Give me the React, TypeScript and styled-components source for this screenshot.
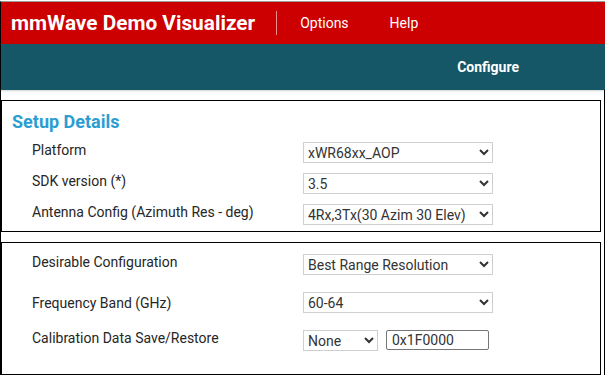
import React from "react";
import styled, { createGlobalStyle } from "styled-components";

const GlobalStyle = createGlobalStyle`
  html, body {
    margin: 0;
    padding: 0;
    background: #ffffff;
  }
  body {
    font-family: Roboto, "Liberation Sans", Arial, sans-serif;
    overflow: hidden;
  }
`;

const Frame = styled.div`
  width: 605px;
  height: 374px;
  box-sizing: border-box;
  margin-top: 1px;
  border-top: 1px solid #9a9a9a;
  border-left: 1px solid #000;
  display: flex;
  flex-direction: column;
`;

const TopBar = styled.header`
  height: 42px;
  background: #cc0000;
  display: flex;
  align-items: center;
  padding-left: 10px;
  color: #fff;
`;

const Brand = styled.div`
  font-size: 20.8px;
  font-weight: 700;
`;

const Divider = styled.span`
  width: 1px;
  height: 24px;
  margin: 0 23px 0 21px;
  background: rgba(255, 255, 255, 0.55);
`;

const MenuItem = styled.span`
  font-size: 14px;
  margin-right: 41px;
`;

const SubBar = styled.nav`
  height: 47px;
  background: #155767;
  box-shadow: 0 1px 2px rgba(0, 0, 0, 0.18);
  display: flex;
  align-items: center;
  justify-content: flex-end;
  padding-right: 86px;
  color: #fff;
  position: relative;
  z-index: 1;
`;

const Tab = styled.span`
  font-size: 14px;
  font-weight: 700;
`;

const Main = styled.main`
  flex: 1;
  border-right: 1px solid #000;
  padding-top: 10px;
  display: flex;
  flex-direction: column;
  gap: 10px;
`;

const Panel = styled.section<{ $top: number; $gap: number; $bottom: number }>`
  width: 600px;
  box-sizing: border-box;
  border: 1px solid #000;
  padding: ${(p) => p.$top}px 0 ${(p) => p.$bottom}px 10px;
  display: flex;
  flex-direction: column;
  gap: ${(p) => p.$gap}px;
`;

const Title = styled.h2`
  margin: 0 0 -1px;
  font-size: 18px;
  line-height: 22px;
  font-weight: 700;
  color: #2c9dd1;
`;

const Row = styled.div`
  display: grid;
  grid-template-columns: 271px auto;
  align-items: center;
  padding-left: 20px;
`;

const Label = styled.label<{ $shift?: number }>`
  font-size: 14px;
  color: #262626;
  margin-top: ${(p) => p.$shift ?? -5}px;
`;

const Controls = styled.div`
  display: flex;
  align-items: center;
  gap: 8px;
`;

const Select = styled.select<{ $w?: number }>`
  width: ${(p) => p.$w ?? 190}px;
  height: 21px;
  box-sizing: border-box;
  border: 1px solid #cfcfcf;
  border-radius: 0;
  background: #fff;
  color: #333;
  font-family: Roboto, "Liberation Sans", Arial, sans-serif;
  font-size: 14px;
  padding: 0;
  outline: none;
`;

const TextInput = styled.input`
  width: 103px;
  height: 20px;
  box-sizing: border-box;
  border: 1px solid #767676;
  border-radius: 2px;
  font-family: Roboto, "Liberation Sans", Arial, sans-serif;
  font-size: 14px;
  color: #333;
  padding: 0 5px;
  margin-top: -1px;
`;

const setupRows = [
  { label: "Platform", value: "xWR68xx_AOP" },
  { label: "SDK version (*)", value: "3.5" },
  { label: "Antenna Config (Azimuth Res - deg)", value: "4Rx,3Tx(30 Azim 30 Elev)" },
];

export default function App() {
  return (
    <>
      <GlobalStyle />
      <Frame>
        <TopBar>
          <Brand>mmWave Demo Visualizer</Brand>
          <Divider />
          <MenuItem>Options</MenuItem>
          <MenuItem>Help</MenuItem>
        </TopBar>
        <SubBar>
          <Tab>Configure</Tab>
        </SubBar>
        <Main>
          <Panel $top={10} $gap={10} $bottom={6}>
            <Title>Setup Details</Title>
            {setupRows.map((r) => (
              <Row key={r.label}>
                <Label>{r.label}</Label>
                <Select defaultValue={r.value}>
                  <option>{r.value}</option>
                </Select>
              </Row>
            ))}
          </Panel>
          <Panel $top={11} $gap={17} $bottom={23}>
            <Row>
              <Label>Desirable Configuration</Label>
              <Select defaultValue="Best Range Resolution">
                <option>Best Range Resolution</option>
              </Select>
            </Row>
            <Row>
              <Label $shift={0}>Frequency Band (GHz)</Label>
              <Select defaultValue="60-64">
                <option>60-64</option>
              </Select>
            </Row>
            <Row>
              <Label $shift={-5}>Calibration Data Save/Restore</Label>
              <Controls>
                <Select $w={75} defaultValue="None">
                  <option>None</option>
                </Select>
                <TextInput defaultValue="0x1F0000" />
              </Controls>
            </Row>
          </Panel>
        </Main>
      </Frame>
    </>
  );
}
